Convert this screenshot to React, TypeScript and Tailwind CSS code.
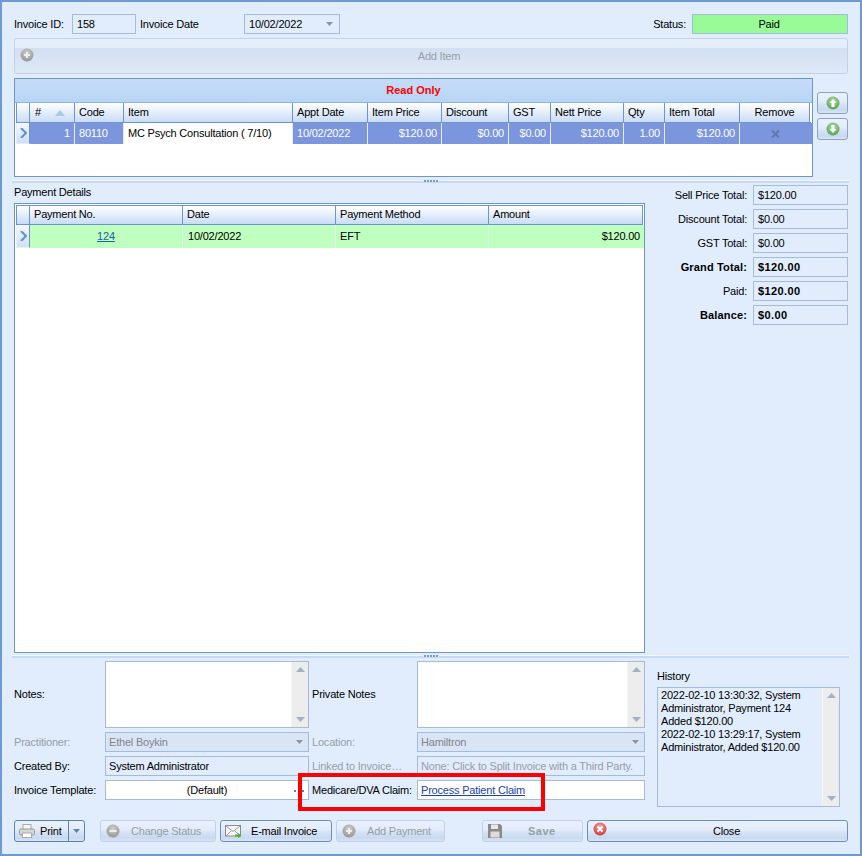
import { ReactNode } from 'react'

const field = 'border border-[#a5bbd9] flex items-center px-[4px] h-[20px] leading-none whitespace-nowrap overflow-hidden'

function CircleIcon({ id, from, to, glyph, size = 14 }: { id: string; from: string; to: string; glyph: ReactNode; size?: number }) {
  return (
    <svg width={size} height={size} viewBox="0 0 14 14" className="shrink-0">
      <defs>
        <radialGradient id={id} cx="50%" cy="35%" r="70%">
          <stop offset="0%" stopColor={from} />
          <stop offset="100%" stopColor={to} />
        </radialGradient>
      </defs>
      <circle cx="7" cy="7" r="6.5" fill={`url(#${id})`} />
      {glyph}
    </svg>
  )
}

const PlusIcon = ({ id }: { id: string }) => (
  <CircleIcon id={id} from="#d2d2d2" to="#8f8f8f" glyph={<path d="M7 4v6M4 7h6" stroke="#eee" strokeWidth="2" />} />
)

const ArrowIcon = ({ id, down }: { id: string; down?: boolean }) => (
  <CircleIcon
    id={id}
    from="#b5dcab"
    to="#4f9f4c"
    glyph={<path d={down ? 'M5.5 3h3v4h2L7 11 3.500 7h2z' : 'M7 3l3.500 4h-2v4h-3V7h-2z'} fill="#fff" />}
  />
)

function SortArrow() {
  return (
    <svg width="10" height="6" viewBox="0 0 10 6" className="shrink-0">
      <path d="M5 0l5 6H0z" fill="#a9c8ee" />
    </svg>
  )
}

function RowArrow() {
  return (
    <svg width="7" height="10" viewBox="0 0 7 10">
      <path d="M1 0l5 5-5 5" fill="none" stroke="#5f95d3" strokeWidth="2.200" />
    </svg>
  )
}

function ComboArrow({ color = '#8b93a3' }: { color?: string }) {
  return (
    <svg width="7" height="4" viewBox="0 0 7 4" className="shrink-0">
      <path d="M0 0h7L3.500 4z" fill={color} />
    </svg>
  )
}

function ScrollBar() {
  return (
    <div className="w-[17px] shrink-0 bg-[#ededed] flex flex-col justify-between items-center py-[5px] border-l border-[#f4f4f4]">
      <svg width="9" height="5" viewBox="0 0 9 5"><path d="M4.500 0L9 5H0z" fill="#a4b0c8" /></svg>
      <svg width="9" height="5" viewBox="0 0 9 5"><path d="M0 0h9L4.500 5z" fill="#a4b0c8" /></svg>
    </div>
  )
}

function HeaderCell({ children, className = '' }: { children?: ReactNode; className?: string }) {
  return (
    <div className={`h-full flex items-center px-[4px] border-r border-[#6d96d1] bg-gradient-to-b from-[#ffffff] to-[#c9dcf6] ${className}`}>
      {children}
    </div>
  )
}

function Splitter() {
  return (
    <div className="relative h-[3px] bg-[#f3f8fe] border-b-2 border-[#c6daf6] -mx-[2px] mr-[-1px] flex justify-center items-center shrink-0">
      <div className="flex gap-[1px] bg-[#e1edfd] px-[1px]">
        {[0, 1, 2, 3, 4].map((i) => (
          <span key={i} className="w-[2px] h-[2px] bg-[#7b9bc9]" />
        ))}
      </div>
    </div>
  )
}

function Btn({ children, disabled, className = '' }: { children: ReactNode; disabled?: boolean; className?: string }) {
  return (
    <div
      className={`h-[22px] rounded-[3px] border flex items-center bg-[linear-gradient(to_bottom,#e9f1fc_0%,#e2ecfa_45%,#d6e3f4_55%,#c8d9ef_85%,#d8e5f6_100%)] ${
        disabled ? 'border-[#c2d1e6] text-[#979ea8]' : 'border-[#7b97bd] text-black'
      } ${className}`}
    >
      {children}
    </div>
  )
}

const totals = [
  { label: 'Sell Price Total:', value: '$120.00' },
  { label: 'Discount Total:', value: '$0.00' },
  { label: 'GST Total:', value: '$0.00' },
  { label: 'Grand Total:', value: '$120.00', bold: true, valueBold: true },
  { label: 'Paid:', value: '$120.00', valueBold: true },
  { label: 'Balance:', value: '$0.00', bold: true, valueBold: true },
]

export default function App() {
  return (
    <div className="relative w-[862px] h-[856px] overflow-hidden bg-[#e1edfd] border-2 border-[#6b9ad5] pt-[12px] pl-[12px] pr-[12px] text-[11px] tracking-[-0.2px] text-black font-['Liberation_Sans',Arial,sans-serif] leading-none whitespace-nowrap">
      {/* top line */}
      <div className="flex items-center h-[20px]">
        <span className="w-[58px]">Invoice ID:</span>
        <div className={`${field} w-[64px]`}>158</div>
        <span className="ml-[4px] w-[104px]">Invoice Date</span>
        <div className={`${field} w-[96px] justify-between pr-[6px]`}>
          10/02/2022
          <ComboArrow />
        </div>
        <span className="ml-auto mr-[6px]">Status:</span>
        <div className="w-[156px] h-[20px] bg-[#98fb98] border border-[#a5bbd9] flex items-center justify-center pr-[2px]">Paid</div>
      </div>

      {/* add item */}
      <div className="relative mt-[4px] h-[36px] w-[834px] rounded-[3px] border border-[#c2d1e6] bg-[linear-gradient(to_bottom,#e6effb_0%,#e4eefb_26%,#d3e0f1_28%,#dfe9f7_100%)] flex items-center justify-center text-[#979ea8]">
        <span className="absolute left-[5px] top-[9px]">
          <PlusIcon id="addItem" />
        </span>
        <span className="pl-[16px]">Add Item</span>
      </div>

      {/* items grid */}
      <div className="mt-[4px] flex">
        <div className="w-[799px] h-[99px] bg-white border border-[#6d96d1] shrink-0">
          <div className="h-[24px] bg-gradient-to-b from-[#c5dcf8] to-[#b9d5f5] flex items-center justify-center font-bold tracking-normal text-[#ff0000] border-b border-[#8db2e3]">
            Read Only
          </div>
          <div className="ml-[1px] w-[795px] grid grid-cols-[14px_45px_49px_169px_75px_74px_67px_42px_73px_41px_75px_70px] h-[20px] border-b border-[#6d96d1]">
            <HeaderCell className="border-l border-l-[#6d96d1]" />
            <HeaderCell className="justify-between pr-[9px]">
              <span className="pl-[1px]">#</span>
              <SortArrow />
            </HeaderCell>
            <HeaderCell>Code</HeaderCell>
            <HeaderCell>Item</HeaderCell>
            <HeaderCell>Appt Date</HeaderCell>
            <HeaderCell>Item Price</HeaderCell>
            <HeaderCell>Discount</HeaderCell>
            <HeaderCell>GST</HeaderCell>
            <HeaderCell>Nett Price</HeaderCell>
            <HeaderCell>Qty</HeaderCell>
            <HeaderCell>Item Total</HeaderCell>
            <HeaderCell className="justify-center">Remove</HeaderCell>
          </div>
          <div className="ml-[1px] w-[796px] grid grid-cols-[14px_45px_49px_169px_75px_74px_67px_42px_73px_41px_75px_71px] h-[21px] text-white bg-[#7b96dc] [&>div]:h-full [&>div]:flex [&>div]:items-center [&>div]:px-[4px] [&>div]:border-r [&>div]:border-[#e6edf9]">
            <div className="justify-center bg-gradient-to-b from-[#f4f8fe] to-[#d0e0f6] border-l border-l-[#6d96d1] !border-r-[#6d96d1] border-b border-b-[#6d96d1] !px-0">
              <RowArrow />
            </div>
            <div className="justify-end">1</div>
            <div>80110</div>
            <div className="bg-white text-black">MC Psych Consultation ( 7/10)</div>
            <div>10/02/2022</div>
            <div className="justify-end">$120.00</div>
            <div className="justify-end">$0.00</div>
            <div className="justify-end">$0.00</div>
            <div className="justify-end">$120.00</div>
            <div className="justify-end">1.00</div>
            <div className="justify-end">$120.00</div>
            <div className="justify-center !border-r-0">
              <svg width="9" height="8" viewBox="0 0 9 8"><path d="M1 0.500l7 7M8 0.500l-7 7" stroke="#5f77ac" strokeWidth="2" /></svg>
            </div>
          </div>
        </div>
        <div className="ml-[4px] mt-[14px] flex flex-col gap-[4px]">
          <Btn className="w-[31px] justify-center !border-[#8ba3c4]"><ArrowIcon id="up" /></Btn>
          <Btn className="w-[31px] justify-center !border-[#8ba3c4]"><ArrowIcon id="down" down /></Btn>
        </div>
      </div>

      <div className="mt-[3px]">
        <Splitter />
      </div>

      {/* payment section */}
      <div className="flex mt-[2px]">
        <div className="w-[631px] shrink-0">
          <div className="h-[18px] flex items-center pb-[3px]">Payment Details</div>
          <div className="h-[450px] bg-white border border-[#6d96d1]">
            <div className="ml-[1px] mt-[1px] w-[627px] grid grid-cols-[14px_153px_153px_153px_154px] h-[20px] border-y border-[#6d96d1] [&>div]:pb-[1px]">
              <HeaderCell className="border-l border-l-[#6d96d1]" />
              <HeaderCell>Payment No.</HeaderCell>
              <HeaderCell>Date</HeaderCell>
              <HeaderCell>Payment Method</HeaderCell>
              <HeaderCell>Amount</HeaderCell>
            </div>
            <div className="ml-[1px] w-[628px] grid grid-cols-[14px_153px_153px_153px_155px] h-[23px] bg-[#bfffbf] [&>div]:h-full [&>div]:flex [&>div]:items-center [&>div]:px-[4px] [&>div]:border-r [&>div]:border-[#e4f7e4]">
              <div className="justify-center bg-gradient-to-b from-[#f4f8fe] to-[#d0e0f6] border-l border-l-[#6d96d1] !border-r-[#6d96d1] border-b border-b-[#6d96d1] !px-0">
                <RowArrow />
              </div>
              <div className="justify-center text-[#1a5fa8] underline">124</div>
              <div className="!pl-[5px]">10/02/2022</div>
              <div>EFT</div>
              <div className="justify-end !border-r-0">$120.00</div>
            </div>
          </div>
        </div>
        <div className="ml-[8px] flex-1 flex flex-col gap-[4px]">
          {totals.map((t) => (
            <div key={t.label} className="flex items-center h-[20px]">
              <span className={`flex-1 text-right pr-[6px] ${t.bold ? 'font-bold tracking-[0.15px]' : ''}`}>{t.label}</span>
              <div className={`${field} w-[95px] ${t.valueBold ? 'font-bold tracking-[0.4px]' : ''}`}>{t.value}</div>
            </div>
          ))}
        </div>
      </div>

      <div className="mt-[2px]">
        <Splitter />
      </div>

      {/* notes section */}
      <div className="flex items-start mt-[3px]">
        <div className="w-[631px] shrink-0 grid grid-cols-[91px_204px_3px_105px_228px] gap-y-[4px] items-center">
          <span>Notes:</span>
          <div className="h-[67px] bg-white border border-[#a5bbd9] flex justify-end"><ScrollBar /></div>
          <span />
          <span>Private Notes</span>
          <div className="h-[67px] bg-white border border-[#a5bbd9] flex justify-end"><ScrollBar /></div>

          <span className="text-[#979ea8]">Practitioner:</span>
          <div className={`${field} bg-[#d9e4f4] text-[#7f8690] justify-between pr-[5px] !pl-[3px]`}>
            Ethel Boykin
            <ComboArrow />
          </div>
          <span />
          <span className="text-[#979ea8]">Location:</span>
          <div className={`${field} bg-[#d9e4f4] text-[#7f8690] justify-between pr-[5px] !pl-[3px]`}>
            Hamiltron
            <ComboArrow />
          </div>

          <span>Created By:</span>
          <div className={`${field} !pl-[3px]`}>System Administrator</div>
          <span />
          <span className="text-[#979ea8]">Linked to Invoice…</span>
          <div className={`${field} text-[#979ea8] !pl-[3px]`}>None: Click to Split Invoice with a Third Party.</div>

          <span>Invoice Template:</span>
          <div className={`${field} bg-white justify-center relative`}>
            (Default)
            <span className="absolute right-[4px] top-[9px] flex gap-[6px]">
              <i className="w-[2px] h-[2px] bg-[#5f7fae]" />
              <i className="w-[2px] h-[2px] bg-[#5f7fae]" />
            </span>
          </div>
          <span />
          <span>Medicare/DVA Claim:</span>
          <div className={`${field} bg-white !pl-[3px]`}>
            <span className="text-[#1c3fa8] underline">Process Patient Claim</span>
          </div>
        </div>
        <div className="ml-[12px]">
          <div className="h-[26px] flex items-end pb-[5px]">History</div>
          <div className="w-[183px] h-[120px] border border-[#a5bbd9] flex">
            <div className="flex-1 pl-[3px] pt-[1px] leading-[13px]">
              2022-02-10 13:30:32, System
              <br />
              Administrator, Payment 124
              <br />
              Added $120.00
              <br />
              2022-02-10 13:29:17, System
              <br />
              Administrator, Added $120.00
            </div>
            <ScrollBar />
          </div>
        </div>
      </div>

      {/* bottom buttons */}
      <div className="flex absolute left-[12px] top-[818px] w-[834px]">
        <Btn className="w-[71px] !border-[#5f82b3]">
          <svg width="16" height="14" viewBox="0 0 16 14" className="ml-[4px] shrink-0">
            <rect x="4" y="0.500" width="8" height="5" fill="#f5f5f5" stroke="#aaa" />
            <rect x="0.500" y="5" width="15" height="6" rx="1.500" fill="#d6d6d6" stroke="#999" />
            <rect x="3.500" y="9" width="9" height="4.500" fill="#fff" stroke="#aaa" />
          </svg>
          <span className="ml-[5px]">Print</span>
          <div className="ml-auto w-[16px] h-full border-l border-[#5f82b3] flex items-center justify-center">
            <ComboArrow color="#5f82b3" />
          </div>
        </Btn>
        <Btn disabled className="ml-[15px] w-[116px]">
          <span className="ml-[5px]">
            <CircleIcon id="status" from="#d2d2d2" to="#8f8f8f" glyph={<path d="M3.500 7h7" stroke="#eee" strokeWidth="2" />} />
          </span>
          <span className="ml-[11px]">Change Status</span>
        </Btn>
        <Btn className="ml-[4px] w-[112px] !border-[#6f8fb9]">
          <svg width="17" height="13" viewBox="0 0 17 13" className="ml-[4px] shrink-0">
            <rect x="0.500" y="0.500" width="15" height="10.500" fill="#f4f4f4" stroke="#8d8d8d" />
            <path d="M1 1l7 5.500L15 1M1 11l5-5M15 11l-5-5" fill="none" stroke="#9a9a9a" />
            <path d="M10 9.500h3V8l3.500 2.500L13 13v-1.500h-3z" fill="#5aa63e" />
          </svg>
          <span className="ml-[9px]">E-mail Invoice</span>
        </Btn>
        <Btn disabled className="ml-[4px] w-[109px]">
          <span className="ml-[5px]"><PlusIcon id="addPayment" /></span>
          <span className="ml-[11px]">Add Payment</span>
        </Btn>
        <Btn disabled className="ml-[37px] w-[101px]">
          <svg width="14" height="14" viewBox="0 0 14 14" className="ml-[5px] shrink-0">
            <path d="M0 0h12l2 2v12H0z" fill="#8a8a8a" />
            <rect x="3" y="0.500" width="7" height="4.500" fill="#e8e8e8" />
            <rect x="2.500" y="7.500" width="9" height="6" fill="#dcdcdc" />
          </svg>
          <span className="ml-[26px] font-bold tracking-[0.5px]">Save</span>
        </Btn>
        <Btn className="ml-[4px] w-[261px] relative justify-center !border-[#6f8fb9]">
          <span className="absolute left-[5px] top-[1px]">
            <CircleIcon
              id="close"
              from="#f7a9a9"
              to="#d22b2b"
              glyph={<path d="M4.500 4.500l5 5M9.500 4.500l-5 5" stroke="#fff" strokeWidth="2" />}
            />
          </span>
          <span className="pl-[18px]">Close</span>
        </Btn>
      </div>

      {/* red annotation box */}
      <div className="absolute left-[296px] top-[771px] w-[247px] h-[38px] border-[4px] border-[#ff0000]" />
    </div>
  )
}
